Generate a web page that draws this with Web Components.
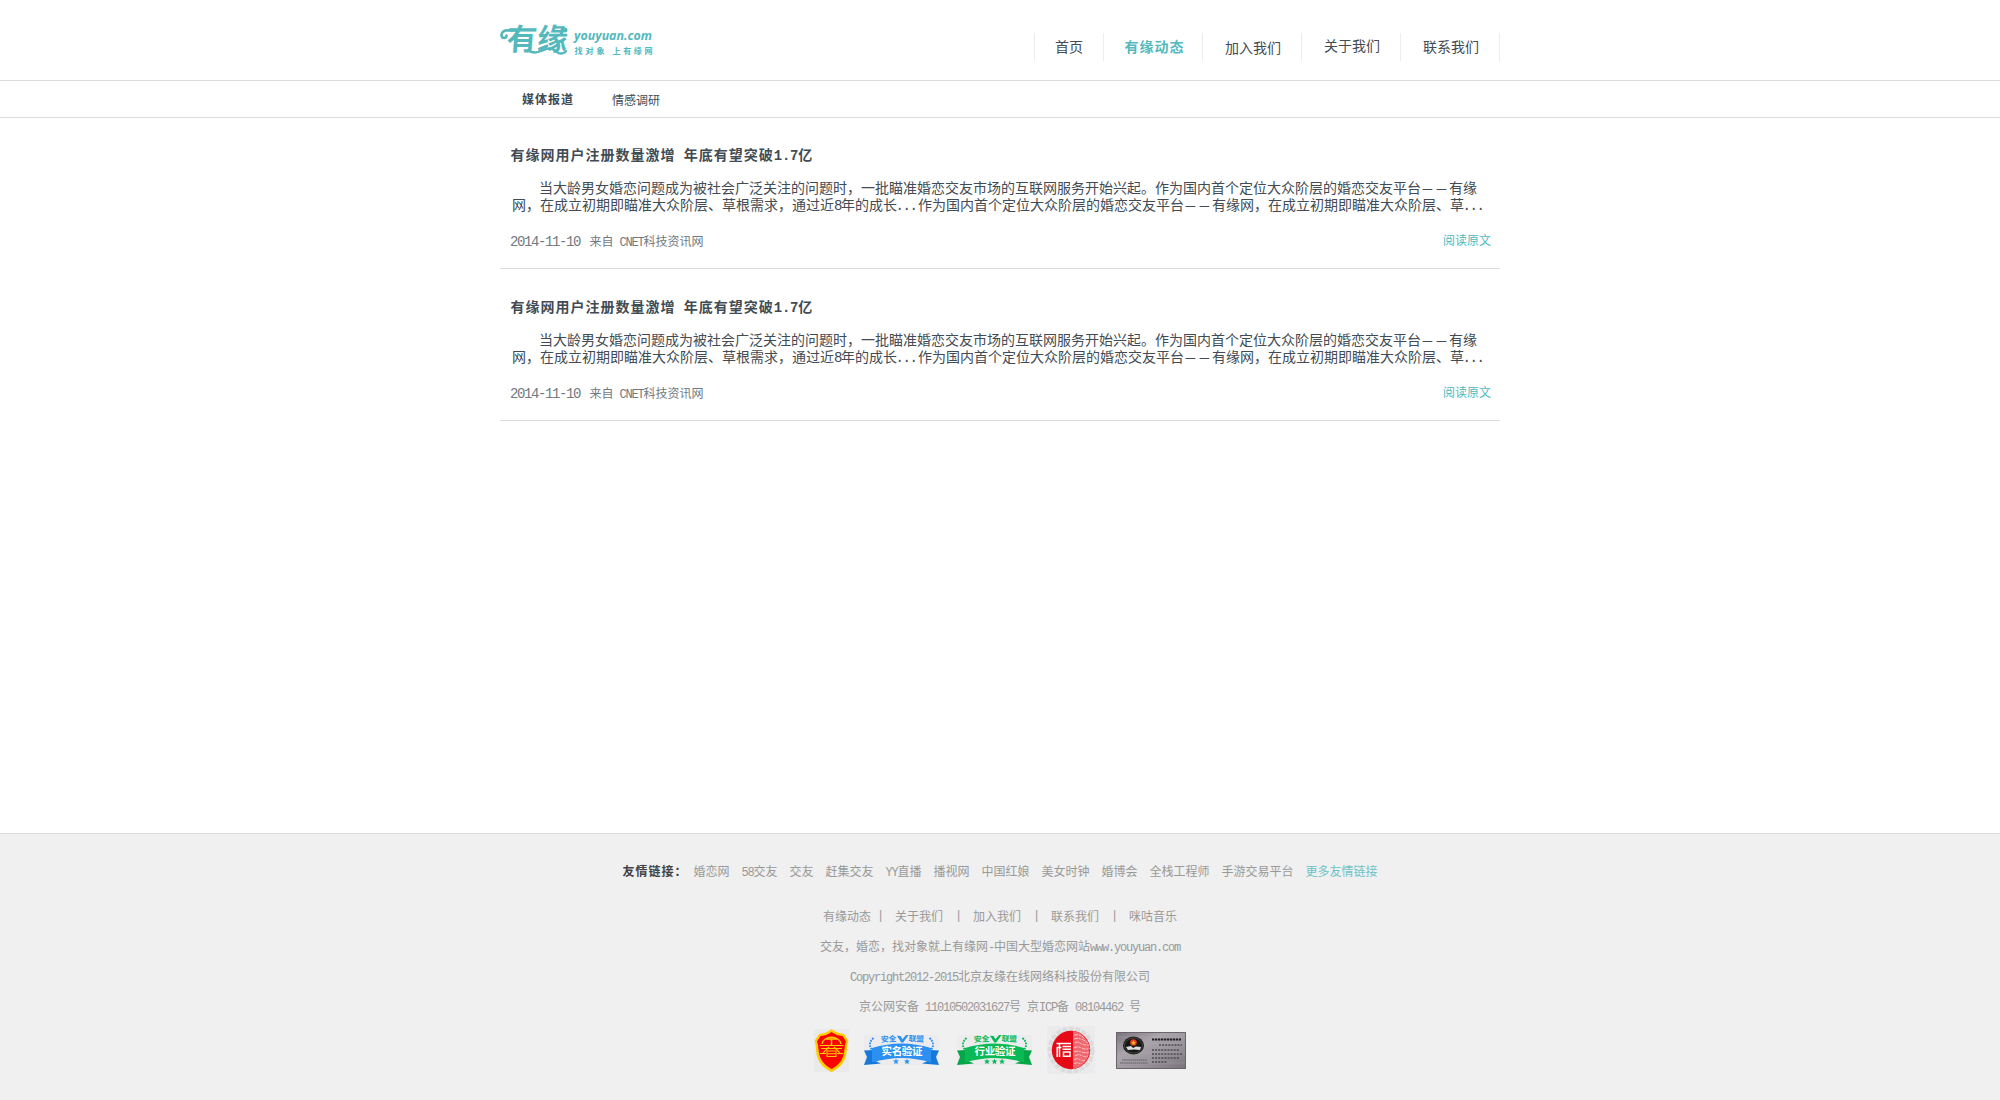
<!DOCTYPE html>
<html lang="zh-CN">
<head>
<meta charset="utf-8">
<title>有缘网 - 有缘动态</title>
<style>
html,body{margin:0;padding:0;background:#fff}
body{font:12px/18px "Noto Sans CJK SC",sans-serif;color:#424b53;--teal:#53b9bd;--line:#dcdcdc}
</style>
</head>
<body>
<yy-page></yy-page>
<script>
// Latin runs sit on half-width cells: one cell is half an em of the Chinese text.
const MONO = `i{font-family:"Liberation Mono","Noto Sans CJK SC",monospace;font-style:normal;letter-spacing:-.1em}`;

function define(name, html) {
  customElements.define(name, class extends HTMLElement {
    constructor() {
      super();
      this.attachShadow({ mode: 'open' }).innerHTML = html;
    }
  });
}

define('yy-logo', `<style>:host{display:block;width:160px;height:36px}svg{display:block;overflow:visible}</style>
<svg width="160" height="36" viewBox="0 0 160 36" fill="#53b9bd" font-family="'Noto Sans CJK SC',sans-serif">
<g transform="translate(6 28.2) skewX(-4)"><text font-size="30" font-weight="700" x="0" y="0" textLength="61" lengthAdjust="spacingAndGlyphs">有缘</text></g>
<path d="M9 8.500C5 7.500 1 10 1.500 13.500C2 17 6.500 16.500 6.500 13.500M8 8.500H16" fill="none" stroke="#53b9bd" stroke-width="2.600" stroke-linecap="round"/>
<path d="M28 28C33 32.500 39 30 45 27.500C50 25.500 54 27 57 30C60 33 65 31 66 29" fill="none" stroke="#53b9bd" stroke-width="2.400" stroke-linecap="round"/>
<circle cx="65" cy="8" r="2.500"/>
<text x="74" y="18" font-family="'Open Sans',sans-serif" font-weight="700" font-style="italic" font-size="13" textLength="78" lengthAdjust="spacingAndGlyphs">youyuan.com</text>
<text x="74.500" y="32" font-size="8" font-weight="700" textLength="30" lengthAdjust="spacing">找对象</text>
<text x="112.500" y="32" font-size="8" font-weight="700" textLength="40" lengthAdjust="spacing">上有缘网</text>
</svg>`);

define('yy-nav-item', `<style>
:host{display:block;box-sizing:border-box;height:28px;width:99px;padding-left:22px;border-right:1px solid #ededed;font-size:14px;line-height:27px;white-space:nowrap}
:host([home]){width:69px;padding-left:20px}
:host([active]){padding-left:20.500px;color:var(--teal);font-weight:700;letter-spacing:1px}
:host([low]){line-height:29px}
:host([high]){line-height:25px}
</style><slot></slot>`);

define('yy-header', `<style>
:host{display:block;height:80px;border-bottom:1px solid var(--line)}
.in{width:1000px;margin:0 auto;display:flex;justify-content:space-between}
yy-logo{margin-top:22px}
nav{display:flex;margin-top:33px;border-left:1px solid #ededed}
</style>
<div class="in"><yy-logo></yy-logo><nav><yy-nav-item home>首页</yy-nav-item><yy-nav-item active>有缘动态</yy-nav-item><yy-nav-item low>加入我们</yy-nav-item><yy-nav-item high>关于我们</yy-nav-item><yy-nav-item>联系我们</yy-nav-item></nav></div>`);

define('yy-subnav', `<style>
:host{display:block;height:36px;border-bottom:1px solid var(--line)}
.in{width:1000px;margin:0 auto;display:flex;line-height:37px}
b{margin-left:22px;letter-spacing:1px;line-height:35px}span{margin-left:38px}
</style><div class="in"><b>媒体报道</b><span>情感调研</span></div>`);

define('yy-article', `<style>${MONO}
:host{display:block;box-sizing:border-box;height:152px;border-bottom:1px solid var(--line);padding:27px 8px 0 10px}
h2{margin:0 0 0 .500px;font-size:14px;line-height:20px;letter-spacing:1px;white-space:pre}
h2 i{letter-spacing:-.2px}
p{margin:13px 0 0 2px;font-size:14px;line-height:17px;white-space:nowrap;text-indent:27px}
.dash span{display:inline-block;width:14px;font-size:12px;font-weight:500;text-indent:1px}
.dots{margin:0 1.500px 0 -1.500px}
.meta{display:flex;margin-top:17px;line-height:18px;color:#707a82}
.date{font-size:14px;width:79.500px;line-height:17px}.src{flex:1}
a{color:var(--teal);position:relative;left:-1px;top:-1px}
</style>
<h2>有缘网用户注册数量激增<i> </i>年底有望突破<i>1.7</i>亿</h2>
<p>当大龄男女婚恋问题成为被社会广泛关注的问题时，一批瞄准婚恋交友市场的互联网服务开始兴起。作为国内首个定位大众阶层的婚恋交友平台<span class="dash"><span>—</span><span>—</span></span>有缘<br>网，在成立初期即瞄准大众阶层、草根需求，通过近<i>8</i>年的成长<i class="dots">...</i>作为国内首个定位大众阶层的婚恋交友平台<span class="dash"><span>—</span><span>—</span></span>有缘网，在成立初期即瞄准大众阶层、草<i class="dots">...</i></p>
<div class="meta"><span class="date"><i>2014-11-10</i></span><span class="src">来自<i> CNET</i>科技资讯网</span><a>阅读原文</a></div>`);

define('yy-friends', `<style>${MONO}
:host{display:flex;justify-content:center;gap:12px;color:#999}
b{color:#424242;letter-spacing:1px;margin-right:-6px}
.more{color:#6cc3c7}
</style><b>友情链接：</b><span>婚恋网</span><span><i>58</i>交友</span><span>交友</span><span>赶集交友</span><span><i>YY</i>直播</span><span>播视网</span><span>中国红娘</span><span>美女时钟</span><span>婚博会</span><span>全栈工程师</span><span>手游交易平台</span><span class="more">更多友情链接</span>`);

define('yy-shield', `<style>:host{display:block}svg{display:block}</style>
<svg width="35" height="43" viewBox="0 0 35 43"><rect width="35" height="43" fill="#eaeaec"/>
<path d="M17.500 0C22 3.500 27 4.500 30 5L34.500 12C32 17 34 23 31 30C28 37 22 41 17.500 43C13 41 7 37 4 30C1 23 3 17 .5 12L5 5C9 4.500 13 3.500 17.500 0Z" fill="#fc0"/>
<path d="M17.500 3C22 6 26 7 28.500 7L32 12.500C30 18 31 23 28.500 29C26 35 21 38 17.500 40C14 38 9 35 6.500 29C4 23 5 18 3 12.500L6.500 7C10 7 14 5.500 17.500 3Z" fill="#f00"/>
<g fill="none" stroke="#fc0"><path d="M8 15C9 6 26 6 27 15" stroke-width="1.300"/><path d="M12 10H23M17.500 10V17" stroke-width="1.500"/><path d="M5.500 16.500H29.500M7 19.500H28" stroke-width="1.200"/><path d="M6 24.500H12M23 24.500H29M15 18L9 24M20 18L26 24" stroke-width="1.100"/><path d="M13 22H22V27.500H13ZM13 24.700H22" stroke-width="1.100"/></g></svg>`);

// Ribbon badge: colours and wording differ between the two certificates.
customElements.define('yy-ribbon', class extends HTMLElement {
  connectedCallback() {
    const c = this.getAttribute('tone'), d = this.getAttribute('dark'), n = +this.getAttribute('stars');
    const xs = n === 2 ? [32, 43] : [30, 37.5, 45];
    const star = x => `<path transform="translate(${x} 26.500)" d="M0-3L.8-1 3-.9 1.300.5 1.900 2.700 0 1.500-1.900 2.700-1.300.5-3-.9-.8-1Z"/>`;
    this.attachShadow({ mode: 'open' }).innerHTML = `<style>:host{display:block}svg{display:block;overflow:visible}</style>
<svg width="75" height="30" viewBox="0 0 75 30" font-family="'Noto Sans CJK SC',sans-serif" fill="${c}">
<rect width="75" height="30" fill="#ececee"/>
<g transform="rotate(-3 24 5)"><text x="17" y="6.800" font-size="7.800" font-weight="700" textLength="15.500">安全</text></g>
<path d="M33 .8L36.500 1.100 38.500 4.300 42 0H44.500L39.300 7.500H37.300Z"/>
<g transform="rotate(3 52 5)"><text x="44.500" y="6.600" font-size="7.800" font-weight="700" textLength="15.500">联盟</text></g>
<g fill="none" stroke="${c}" stroke-width="1.800" stroke-dasharray="1.800 1"><path d="M9.500 3C5 7 5 11 8 15"/><path d="M65.500 3C70 7 70 11 67 15"/></g>
<path fill="${d}" d="M0 15.500L9 15V25L17 28.500L0 30L3 22ZM75 15.500L66 15V25L58 28.500L75 30L72 22Z"/>
<path d="M8 13Q37.500 4 67 13V27.500Q37.500 18.500 8 27.500Z"/>
<text x="17.500" y="20.300" font-size="10.500" font-weight="700" fill="#fff" textLength="41">${this.getAttribute('label')}</text>
${xs.map(star).join('')}</svg>`;
  }
});

define('yy-seal', `<style>:host{display:block}svg{display:block}</style>
<svg width="48" height="48" viewBox="0 0 48 48"><rect width="48" height="48" fill="#ebebed"/>
<circle cx="24" cy="24" r="21.300" fill="none" stroke="#dcdcdd" stroke-width="4.500" stroke-dasharray="5 1.500"/>
<circle cx="24" cy="24" r="19.200" fill="#e60a17"/>
<path d="M26 5A19.200 19.200 0 0 1 26 43Z" fill="#ef6870"/>
<g fill="none" stroke="#fbd0d2" stroke-width=".9" stroke-dasharray="4 .8 2 1.200"><path d="M27 9C31 8 34 9 37 12M27 13C32 11 37 14 41 17M28 17C31 14 35 20 42 19M27 22C33 18 36 26 43 22M27 26C32 23 37 29 43 26M28 30C34 26 36 33 41 30M27 34C32 30 35 37 38 34M27 38C30 35 33 39 35 37"/></g>
<g fill="none" stroke="#fff" stroke-width="1.500"><path d="M9.500 17.500H24M9.500 21.500H14.500M12.500 17.500V31M10.200 21.500V31M15.500 20.500H24M15.500 23.200H24M16.500 26H23V30.300H16.500Z"/></g></svg>`);

define('yy-plaque', `<style>:host{display:block}svg{display:block}</style>
<svg width="70" height="37" viewBox="0 0 70 37"><defs><linearGradient id="g" x2="1" y2="1"><stop stop-color="#77727a"/><stop offset=".35" stop-color="#aaa5ab"/><stop offset=".65" stop-color="#98939a"/><stop offset="1" stop-color="#777178"/></linearGradient></defs>
<rect width="70" height="37" fill="url(#g)"/><path d="M.5.5H69.500V36.500H.5Z" fill="none" stroke="#6a636a"/>
<path d="M1 5H69M1 12H69M1 21H69M1 31H69" stroke="#b9b4ba" stroke-width=".5" opacity=".5"/>
<ellipse cx="17.500" cy="13.500" rx="10.500" ry="9" fill="#181818"/><ellipse cx="17.500" cy="13.500" rx="9" ry="7.600" fill="none" stroke="#666" stroke-width=".6"/>
<circle cx="17.500" cy="10.500" r="3.300" fill="#e23b16"/><path d="M17.500 8L18.300 10H20L18.600 11.200 19 13 17.500 12 16 13 16.400 11.200 15 10H16.700Z" fill="#f6b52b"/>
<path d="M10 15L15 14 17 16 20 14.500 25 15 24 18 18 17.500 12 18Z" fill="#ddd"/>
<path d="M36 7.500H65" stroke="#211d22" stroke-width="2" stroke-dasharray="2.300 .7"/>
<g stroke="#4e4850" stroke-width="1.300" stroke-dasharray="2 1.100"><path d="M43 13H66M36 18H64M36 22H66M36 26H63M36 30H51"/></g>
<path d="M6 28H31M4 31H32" stroke="#5c565e" stroke-dasharray="1.500 .6"/></svg>`);

define('yy-badges', `<style>:host{display:flex;width:372px;margin:0 auto;align-items:flex-start}
yy-shield{margin-top:3px}yy-ribbon{margin:9px 0 0 15px}yy-ribbon+yy-ribbon{margin-left:18px}
yy-seal{margin-left:15px}yy-plaque{margin:6px 0 0 21px}</style>
<yy-shield></yy-shield><yy-ribbon tone="#2b90ef" dark="#1878d9" stars="2" label="实名验证"></yy-ribbon><yy-ribbon tone="#09b955" dark="#05a647" stars="3" label="行业验证"></yy-ribbon><yy-seal></yy-seal><yy-plaque></yy-plaque>`);

define('yy-footer', `<style>${MONO}
:host{display:block;box-sizing:border-box;height:267px;border-top:1px solid var(--line);background:#f0f0f0;padding-top:27px;color:#999}
yy-friends{line-height:20px}
.row{display:flex;justify-content:center;line-height:30px;height:30px;white-space:pre}
.nav{margin-top:18px;gap:12px}.nav span:first-child{margin-right:-6px}
.nav i{width:6px}
yy-badges{margin-top:5px}
</style>
<yy-friends></yy-friends>
<div class="row nav"><span>有缘动态</span><i>|</i><span>关于我们</span><i>|</i><span>加入我们</span><i>|</i><span>联系我们</span><i>|</i><span>咪咕音乐</span></div>
<div class="row"><span>交友，婚恋，找对象就上有缘网<i>-</i>中国大型婚恋网站<i>www.youyuan.com</i></span></div>
<div class="row"><span><i>Copyright2012-2015</i>北京友缘在线网络科技股份有限公司</span></div>
<div class="row"><span>京公网安备<i> 11010502031627</i>号<i> </i>京<i>ICP</i>备<i> 08104462 </i>号</span></div>
<yy-badges></yy-badges>`);

define('yy-page', `<style>
:host{display:flex;flex-direction:column;height:1100px;overflow:hidden}
main{flex:1;width:1000px;margin:-1px auto 0;box-sizing:border-box}
</style><yy-header></yy-header><yy-subnav></yy-subnav><main><yy-article></yy-article><yy-article></yy-article></main><yy-footer></yy-footer>`);
</script>
</body>
</html>
